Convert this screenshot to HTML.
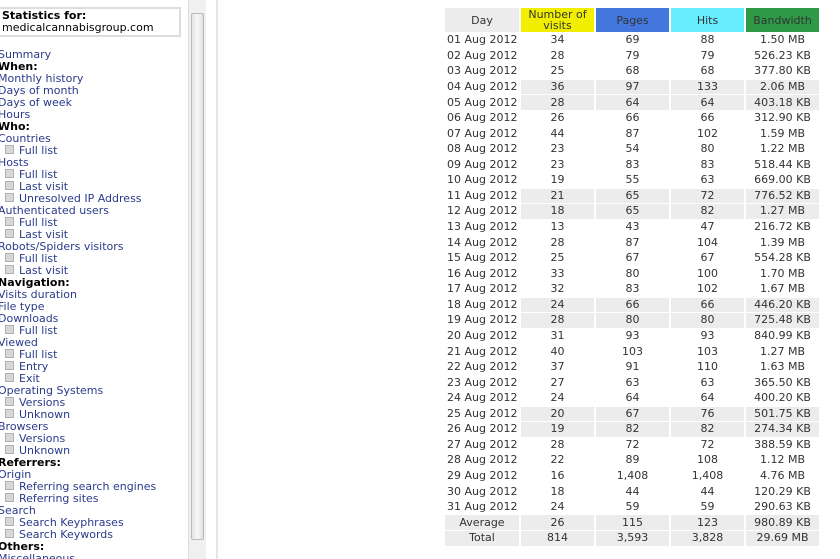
<!DOCTYPE html>
<html><head><meta charset="utf-8"><style>
*{margin:0;padding:0;box-sizing:border-box}
body{width:840px;height:559px;overflow:hidden;background:#fff;font-family:"DejaVu Sans","Liberation Sans",sans-serif;font-size:11px;color:#333;position:relative}
#left{position:absolute;left:0;top:0;width:188px;height:559px;overflow:hidden}
#stat{position:absolute;left:-3px;top:7px;width:184px;height:30px;border:2px solid #ddd;padding:1px 0 0 3px;line-height:12px;color:#000}
#menu{position:absolute;left:-2px;top:49px;line-height:12px;white-space:nowrap}
#menu div{height:12px;color:#2a3a8a}
#menu b{color:#000}
#menu .s{padding-left:7px}
#menu .s:before{content:"";display:inline-block;width:7px;height:7px;background:#d8d8d8;border:1px solid #b0b0b0;margin-right:5px;vertical-align:0}
#sb{position:absolute;left:188px;top:0;width:18px;height:559px;background:#f0f0f0;border-left:1px solid #ddd}
#thumb{position:absolute;left:2px;top:13px;width:13px;height:527px;background:linear-gradient(90deg,#e4e4e4,#f8f8f8 50%,#e0e0e0);border:1px solid #bbb;border-radius:2px}
#sep{position:absolute;left:216px;top:0;width:2px;height:559px;background:#e6e6e6}
table{position:absolute;left:443px;top:7px;border-collapse:separate;border-spacing:2px 1px}
td{height:14.57px;text-align:center;padding:0;line-height:14px;white-space:nowrap}
td.d{text-align:left;padding-left:2px;width:74px}
td.c{width:73px}
tr.w td.c,tr.t td{background:#ececec}
th{height:24px;font-weight:normal;line-height:11px;font-size:11px;color:#333}
</style></head><body>
<div id="left">
<div id="stat"><b>Statistics for:</b><br>medicalcannabisgroup.com</div>
<div id="menu">
<div>Summary</div><div><b>When:</b></div><div>Monthly history</div><div>Days of month</div><div>Days of week</div><div>Hours</div><div><b>Who:</b></div><div>Countries</div><div class="s">Full list</div><div>Hosts</div><div class="s">Full list</div><div class="s">Last visit</div><div class="s">Unresolved IP Address</div><div>Authenticated users</div><div class="s">Full list</div><div class="s">Last visit</div><div>Robots/Spiders visitors</div><div class="s">Full list</div><div class="s">Last visit</div><div><b>Navigation:</b></div><div>Visits duration</div><div>File type</div><div>Downloads</div><div class="s">Full list</div><div>Viewed</div><div class="s">Full list</div><div class="s">Entry</div><div class="s">Exit</div><div>Operating Systems</div><div class="s">Versions</div><div class="s">Unknown</div><div>Browsers</div><div class="s">Versions</div><div class="s">Unknown</div><div><b>Referrers:</b></div><div>Origin</div><div class="s">Referring search engines</div><div class="s">Referring sites</div><div>Search</div><div class="s">Search Keyphrases</div><div class="s">Search Keywords</div><div><b>Others:</b></div><div>Miscellaneous</div>
</div></div>
<div id="sb"><div id="thumb"></div></div>
<div id="sep"></div>
<table>
<tr><th style="background:#ececec;width:74px">Day</th><th style="background:#f2ee00;width:73px">Number of<br>visits</th><th style="background:#4477dd;width:73px">Pages</th><th style="background:#66eeff;width:73px">Hits</th><th style="background:#2e9a48;width:73px">Bandwidth</th></tr>
<tr><td class="d">01 Aug 2012</td><td class="c">34</td><td class="c">69</td><td class="c">88</td><td class="c">1.50 MB</td></tr>
<tr><td class="d">02 Aug 2012</td><td class="c">28</td><td class="c">79</td><td class="c">79</td><td class="c">526.23 KB</td></tr>
<tr><td class="d">03 Aug 2012</td><td class="c">25</td><td class="c">68</td><td class="c">68</td><td class="c">377.80 KB</td></tr>
<tr class="w"><td class="d">04 Aug 2012</td><td class="c">36</td><td class="c">97</td><td class="c">133</td><td class="c">2.06 MB</td></tr>
<tr class="w"><td class="d">05 Aug 2012</td><td class="c">28</td><td class="c">64</td><td class="c">64</td><td class="c">403.18 KB</td></tr>
<tr><td class="d">06 Aug 2012</td><td class="c">26</td><td class="c">66</td><td class="c">66</td><td class="c">312.90 KB</td></tr>
<tr><td class="d">07 Aug 2012</td><td class="c">44</td><td class="c">87</td><td class="c">102</td><td class="c">1.59 MB</td></tr>
<tr><td class="d">08 Aug 2012</td><td class="c">23</td><td class="c">54</td><td class="c">80</td><td class="c">1.22 MB</td></tr>
<tr><td class="d">09 Aug 2012</td><td class="c">23</td><td class="c">83</td><td class="c">83</td><td class="c">518.44 KB</td></tr>
<tr><td class="d">10 Aug 2012</td><td class="c">19</td><td class="c">55</td><td class="c">63</td><td class="c">669.00 KB</td></tr>
<tr class="w"><td class="d">11 Aug 2012</td><td class="c">21</td><td class="c">65</td><td class="c">72</td><td class="c">776.52 KB</td></tr>
<tr class="w"><td class="d">12 Aug 2012</td><td class="c">18</td><td class="c">65</td><td class="c">82</td><td class="c">1.27 MB</td></tr>
<tr><td class="d">13 Aug 2012</td><td class="c">13</td><td class="c">43</td><td class="c">47</td><td class="c">216.72 KB</td></tr>
<tr><td class="d">14 Aug 2012</td><td class="c">28</td><td class="c">87</td><td class="c">104</td><td class="c">1.39 MB</td></tr>
<tr><td class="d">15 Aug 2012</td><td class="c">25</td><td class="c">67</td><td class="c">67</td><td class="c">554.28 KB</td></tr>
<tr><td class="d">16 Aug 2012</td><td class="c">33</td><td class="c">80</td><td class="c">100</td><td class="c">1.70 MB</td></tr>
<tr><td class="d">17 Aug 2012</td><td class="c">32</td><td class="c">83</td><td class="c">102</td><td class="c">1.67 MB</td></tr>
<tr class="w"><td class="d">18 Aug 2012</td><td class="c">24</td><td class="c">66</td><td class="c">66</td><td class="c">446.20 KB</td></tr>
<tr class="w"><td class="d">19 Aug 2012</td><td class="c">28</td><td class="c">80</td><td class="c">80</td><td class="c">725.48 KB</td></tr>
<tr><td class="d">20 Aug 2012</td><td class="c">31</td><td class="c">93</td><td class="c">93</td><td class="c">840.99 KB</td></tr>
<tr><td class="d">21 Aug 2012</td><td class="c">40</td><td class="c">103</td><td class="c">103</td><td class="c">1.27 MB</td></tr>
<tr><td class="d">22 Aug 2012</td><td class="c">37</td><td class="c">91</td><td class="c">110</td><td class="c">1.63 MB</td></tr>
<tr><td class="d">23 Aug 2012</td><td class="c">27</td><td class="c">63</td><td class="c">63</td><td class="c">365.50 KB</td></tr>
<tr><td class="d">24 Aug 2012</td><td class="c">24</td><td class="c">64</td><td class="c">64</td><td class="c">400.20 KB</td></tr>
<tr class="w"><td class="d">25 Aug 2012</td><td class="c">20</td><td class="c">67</td><td class="c">76</td><td class="c">501.75 KB</td></tr>
<tr class="w"><td class="d">26 Aug 2012</td><td class="c">19</td><td class="c">82</td><td class="c">82</td><td class="c">274.34 KB</td></tr>
<tr><td class="d">27 Aug 2012</td><td class="c">28</td><td class="c">72</td><td class="c">72</td><td class="c">388.59 KB</td></tr>
<tr><td class="d">28 Aug 2012</td><td class="c">22</td><td class="c">89</td><td class="c">108</td><td class="c">1.12 MB</td></tr>
<tr><td class="d">29 Aug 2012</td><td class="c">16</td><td class="c">1,408</td><td class="c">1,408</td><td class="c">4.76 MB</td></tr>
<tr><td class="d">30 Aug 2012</td><td class="c">18</td><td class="c">44</td><td class="c">44</td><td class="c">120.29 KB</td></tr>
<tr><td class="d">31 Aug 2012</td><td class="c">24</td><td class="c">59</td><td class="c">59</td><td class="c">290.63 KB</td></tr>
<tr class="t"><td>Average</td><td>26</td><td>115</td><td>123</td><td>980.89 KB</td></tr>
<tr class="t"><td>Total</td><td>814</td><td>3,593</td><td>3,828</td><td>29.69 MB</td></tr>
</table>
</body></html>
